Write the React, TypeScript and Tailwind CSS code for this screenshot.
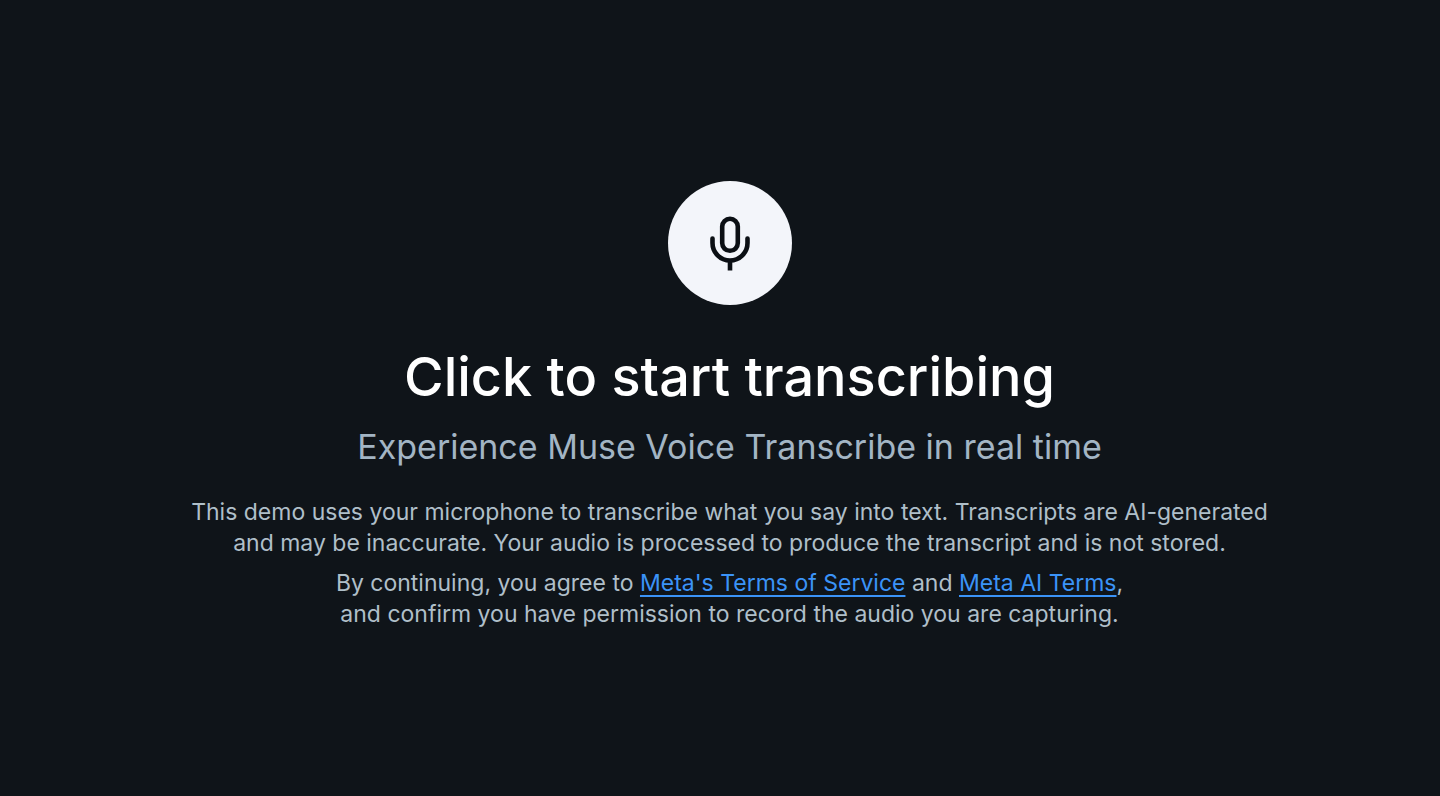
export default function App() {
  return (
    <main className="flex min-h-screen flex-col items-center bg-[#0f1419] pt-[181px] pb-16 pl-[19px] text-center font-['Inter',sans-serif]">
      <button
        type="button"
        aria-label="Start transcribing"
        className="flex size-[124px] items-center justify-center rounded-full bg-[#f3f5fa] text-[#0b0f14]"
      >
        <svg
          viewBox="0 0 44 56"
          className="h-14 w-11"
          fill="none"
          stroke="currentColor"
          strokeWidth="4.6"
        >
          <rect x="14.2" y="3.8" width="15.6" height="32" rx="7.8" />
          <path d="M4.5 23.5v4.5a17.5 17.5 0 0 0 35 0v-4.5" strokeLinecap="round" />
          <path d="M22 45v10.5" />
        </svg>
      </button>

      <h1 className="mt-9 text-[54px] leading-[72px] font-medium text-white">Click to start transcribing</h1>
      <p className="mt-2 text-[34px] leading-[52px] text-[#a3b5c4]">Experience Muse Voice Transcribe in real time</p>

      <div className="mt-6 flex flex-col gap-[9px] text-[23px] leading-[31px] text-[#afbfc9]">
        <p>
          This demo uses your microphone to transcribe what you say into text. Transcripts are AI-generated
          <br />
          and may be inaccurate. Your audio is processed to produce the transcript and is not stored.
        </p>
        <p>
          By continuing, you agree to{" "}
          <a href="#terms" className="text-[#3b93f7] underline decoration-2 underline-offset-4">Meta's Terms of Service</a> and{" "}
          <a href="#ai-terms" className="text-[#3b93f7] underline decoration-2 underline-offset-4">Meta AI Terms</a>,
          <br />
          and confirm you have permission to record the audio you are capturing.
        </p>
      </div>
    </main>
  )
}
